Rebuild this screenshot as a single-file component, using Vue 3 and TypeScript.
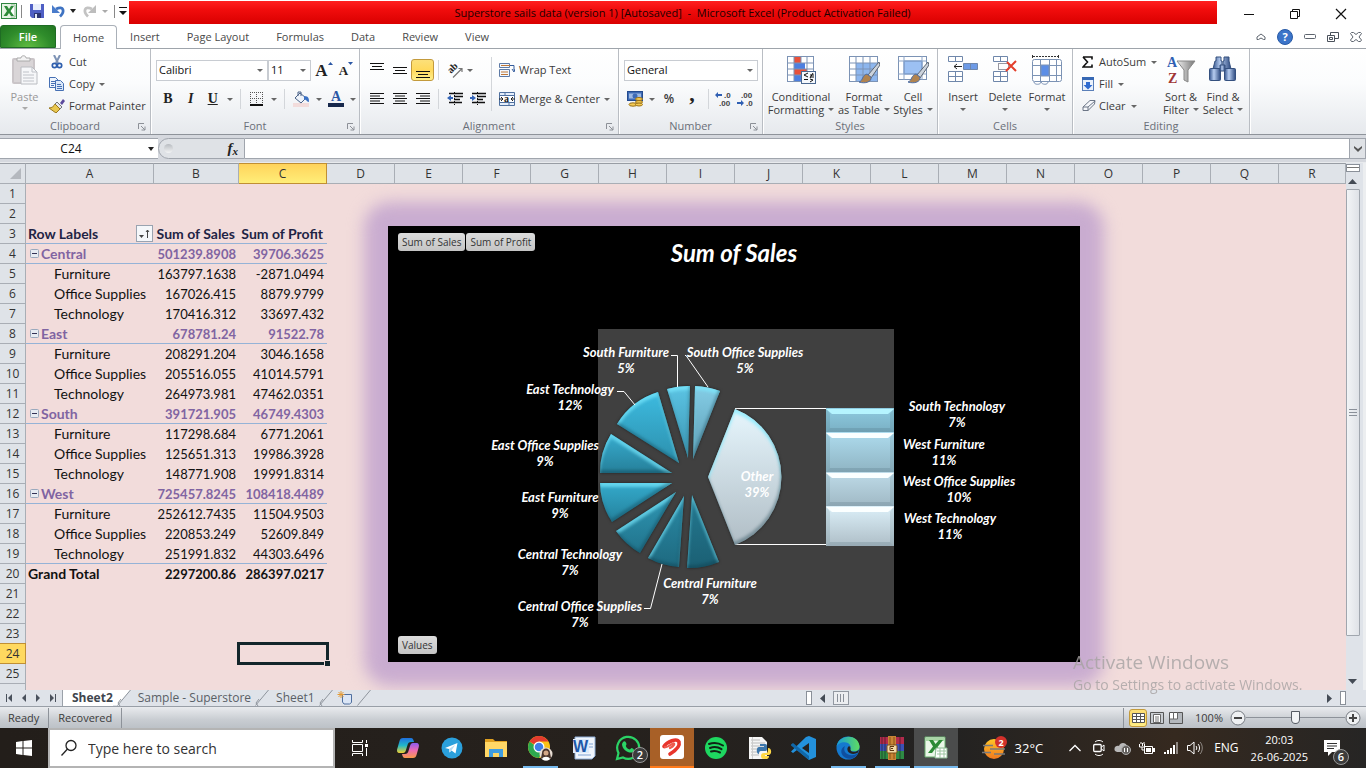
<script setup lang="ts">
import { ref } from 'vue'

interface PivotRow { kind: 'head' | 'group' | 'item' | 'total' | 'blank'; label?: string; sales?: string; profit?: string; line?: boolean }
interface Slice { d: string; top: string; bottom: string }
interface Label { name: string; pct: string; x: number; y: number }

const tabs = ['Home', 'Insert', 'Page Layout', 'Formulas', 'Data', 'Review', 'View']
const activeTab = ref('Home')
const font = ref('Calibri')
const size = ref('11')
const format = ref('General')
const formula = ref('')
const zoom = ref(50)
const search = ref('')

const columns = ['A', 'B', 'C', 'D', 'E', 'F', 'G', 'H', 'I', 'J', 'K', 'L', 'M', 'N', 'O', 'P', 'Q', 'R']

const blank = (n: number): PivotRow[] => Array.from({ length: n }, () => ({ kind: 'blank' as const }))
const item = (label: string, sales: string, profit: string, line = false): PivotRow => ({ kind: 'item', label, sales, profit, line })
const group = (label: string, sales: string, profit: string): PivotRow => ({ kind: 'group', label, sales, profit, line: true })

const rows: PivotRow[] = [
  ...blank(2),
  { kind: 'head', label: 'Row Labels', sales: 'Sum of Sales', profit: 'Sum of Profit', line: true },
  group('Central', '501239.8908', '39706.3625'),
  item('Furniture', '163797.1638', '-2871.0494'),
  item('Office Supplies', '167026.415', '8879.9799'),
  item('Technology', '170416.312', '33697.432'),
  group('East', '678781.24', '91522.78'),
  item('Furniture', '208291.204', '3046.1658'),
  item('Office Supplies', '205516.055', '41014.5791'),
  item('Technology', '264973.981', '47462.0351'),
  group('South', '391721.905', '46749.4303'),
  item('Furniture', '117298.684', '6771.2061'),
  item('Office Supplies', '125651.313', '19986.3928'),
  item('Technology', '148771.908', '19991.8314'),
  group('West', '725457.8245', '108418.4489'),
  item('Furniture', '252612.7435', '11504.9503'),
  item('Office Supplies', '220853.249', '52609.849'),
  item('Technology', '251991.832', '44303.6496', true),
  { kind: 'total', label: 'Grand Total', sales: '2297200.86', profit: '286397.0217' },
  ...blank(6),
]

const slices: Slice[] = [
  { d: 'M688 458 L667 389 A73 73 0 0 1 690 386 Z', top: '#5cc4e4', bottom: '#3a94b0' },
  { d: 'M693 459 L695 386 A73 73 0 0 1 720 391 Z', top: '#84cde6', bottom: '#5d9db3' },
  { d: 'M679 463 L617 424 A73 73 0 0 1 658 392 Z', top: '#3dbbe0', bottom: '#2c8fac' },
  { d: 'M672 473 L600 473 A73 73 0 0 1 611 434 Z', top: '#38add0', bottom: '#257f99' },
  { d: 'M672 483 L612 522 A73 73 0 0 1 600 483 Z', top: '#34aacb', bottom: '#24819c' },
  { d: 'M676 492 L640 553 A73 73 0 0 1 616 531 Z', top: '#2f98b6', bottom: '#21738b' },
  { d: 'M684 496 L679 567 A73 73 0 0 1 648 558 Z', top: '#2a8aa6', bottom: '#1e6a80' },
  { d: 'M692 495 L719 562 A73 73 0 0 1 687 568 Z', top: '#247991', bottom: '#1b6074' },
  { d: 'M708 477 L735 409 A73 73 0 0 1 735 545 Z', top: '#e6f6fd', bottom: '#b0bdc5' },
]

const bars = [
  { y: 408, h: 24, top: '#8ecbe0', bottom: '#7ab0c4' },
  { y: 432, h: 40, top: '#aedcee', bottom: '#8fb4c3' },
  { y: 472, h: 34, top: '#bedbe8', bottom: '#a0b9c5' },
  { y: 506, h: 40, top: '#dcf0f9', bottom: '#aebec7' },
]

const labels: Label[] = [
  { name: 'South Furniture', pct: '5%', x: 626, y: 357 },
  { name: 'South Office Supplies', pct: '5%', x: 745, y: 357 },
  { name: 'East Technology', pct: '12%', x: 570, y: 394 },
  { name: 'East Office Supplies', pct: '9%', x: 545, y: 450 },
  { name: 'East Furniture', pct: '9%', x: 560, y: 502 },
  { name: 'Central Technology', pct: '7%', x: 570, y: 559 },
  { name: 'Central Furniture', pct: '7%', x: 710, y: 588 },
  { name: 'Central Office Supplies', pct: '7%', x: 580, y: 611 },
  { name: 'Other', pct: '39%', x: 757, y: 481 },
  { name: 'South Technology', pct: '7%', x: 957, y: 411 },
  { name: 'West Furniture', pct: '11%', x: 944, y: 449 },
  { name: 'West Office Supplies', pct: '10%', x: 959, y: 486 },
  { name: 'West Technology', pct: '11%', x: 950, y: 523 },
]

const lineSets = {
  top: 'M0 1.5h14M2 4.5h10M0 7.5h14',
  middle: 'M0 5.5h14M2 8.5h10M0 11.5h14',
  bottom: 'M0 9.5h14M2 12.5h10M0 15.5h14',
}
</script>

<template>
  <div class="app">
    <!-- Title bar -->
    <header class="titlebar">
      <div class="quick">
        <svg width="16" height="16" viewBox="0 0 16 16"><rect x=".5" y=".5" width="15" height="15" fill="#e6f3e4" stroke="#2e8540"/><path d="M10 2h4v12h-4" fill="#fff" stroke="#8ebf91"/><path d="M3 3h3l2 3 2-3h3L9.500 8l3.500 5h-3L8 10l-2 3H2.500L6 8z" fill="#2d8a38"/></svg>
        <i class="bar"></i>
        <button aria-label="Save"><svg width="14" height="14" viewBox="0 0 14 14"><path d="M0 0h14v14H2l-2-2z" fill="#4f5fc4"/><path d="M3 0h8v6H3z" fill="#e8eefb"/><path d="M4 9h7v5H4z" fill="#2b3474"/><path d="M5 10h2v4H5z" fill="#dfe6f7"/></svg></button>
        <button class="undo" aria-label="Undo"><svg width="14" height="14" viewBox="0 0 14 14"><path d="M4 5c8-4 9 3 4 7.500" fill="none" stroke="#3f73c2" stroke-width="2.800"/><path d="M0 1v8h8z" fill="#4a7ccb"/></svg></button>
        <i class="arr dark"></i>
        <button class="redo" aria-label="Redo"><svg width="14" height="14" viewBox="0 0 14 14"><path d="M10 5c-8-4-9 3-4 7.500" fill="none" stroke="#c3c3c3" stroke-width="2.800"/><path d="M14 1v8H6z" fill="#bdbdbd"/></svg></button>
        <i class="arr pale"></i>
        <i class="bar end"></i>
        <svg width="8" height="8" viewBox="0 0 8 8"><path d="M0 .5h8" stroke="#111"/><path d="M0 4h8L4 8z" fill="#111"/></svg>
      </div>
      <div class="banner">Superstore sails data (version 1) [Autosaved]&nbsp; -&nbsp; Microsoft Excel (Product Activation Failed)</div>
      <div class="window">
        <button aria-label="Minimize"><svg width="12" height="12" viewBox="0 0 12 12"><path d="M1 6.500h10" stroke="#111"/></svg></button>
        <button aria-label="Restore"><svg width="12" height="12" viewBox="0 0 12 12" fill="none" stroke="#111"><path d="M3.500 3.500v-2h7v7h-2M1.500 3.500h7v7h-7z"/></svg></button>
        <button aria-label="Close"><svg width="12" height="12" viewBox="0 0 12 12"><path d="M1 1l10 10M11 1L1 11" stroke="#111" stroke-width="1.200"/></svg></button>
      </div>
    </header>

    <!-- Ribbon tabs -->
    <nav class="tabs">
      <button class="file">File</button>
      <button v-for="t in tabs" :key="t" class="tab" :class="{ on: t === activeTab }" @click="activeTab = t">{{ t }}</button>
      <div class="tools">
        <svg width="10" height="8" viewBox="0 0 10 8" fill="#fff" stroke="#5d646e"><path d="M1 4l4-3 4 3v2.500H7.500L5 5 2.500 6.500H1z"/></svg>
        <button class="help" aria-label="Help">?</button>
        <svg width="12" height="6" viewBox="0 0 12 6"><rect x=".5" y=".5" width="11" height="4" rx="1" fill="#fff" stroke="#5d646e"/></svg>
        <svg width="12" height="12" viewBox="0 0 12 12" fill="#fff" stroke="#4b525c"><path d="M3.500 1.500h8v6h-8z"/><path d="M.5 4.500h7v6h-7z"/><path d="M2.500 6.500h3v2h-3z"/></svg>
        <svg width="12" height="10" viewBox="0 0 12 10" fill="#fff" stroke="#5d646e"><path d="M.5 1.500l1-1h2L6 2.500 8.500.5h2l1 1L9 5l2.500 3-1 1.500h-2L6 7.500 3.500 9.500h-2L.5 8 3 5z"/></svg>
      </div>
    </nav>

    <!-- Ribbon -->
    <section class="ribbon">
      <div class="group g-clip">
        <div class="body">
          <button class="big paste"><svg width="28" height="30" viewBox="0 0 28 30"><rect x="1" y="3" width="23" height="26" rx="2" fill="#cac5c8"/><rect x="3" y="5" width="19" height="22" fill="#d9d5d7"/><path d="M6 6V3h4c0-3 5-3 5 0h4v3z" fill="#f3f3f3" stroke="#aaa"/><path d="M10 12h11l5 5v12H10z" fill="#f6f7f9" stroke="#babcc1"/><path d="M21 12v5h5M12 17h6M12 20h11M12 23h11M12 26h11" fill="none" stroke="#bfc2c8"/></svg><span>Paste</span><i class="arr pale"></i></button>
          <div class="stack">
            <button><svg width="16" height="14" viewBox="0 0 16 14"><path d="M5 0l4 8M11 0L7 8" stroke="#7d93b5" stroke-width="2"/><circle cx="5.500" cy="10.500" r="2.200" fill="none" stroke="#2f5fae" stroke-width="1.700"/><circle cx="10.500" cy="10.500" r="2.200" fill="none" stroke="#2f5fae" stroke-width="1.700"/></svg>Cut</button>
            <button><svg width="16" height="14" viewBox="0 0 16 14" stroke="#4670b4"><path d="M.5.500h6l3 3v7h-9z" fill="#eef4fc"/><path d="M2 4.500h4M2 6.500h4M2 8.500h3"/><path d="M6.500 3.500h5l3 3v7h-8z" fill="#dbe8f9"/><path d="M8 7.500h4M8 9.500h5M8 11.500h5"/></svg>Copy<i class="arr"></i></button>
            <button><svg width="16" height="14" viewBox="0 0 16 14"><path d="M11 4l3-4 2 2-3 4z" fill="#5b4a9c"/><path d="M8 3l5 5-2 2-5-5z" fill="#e8e8ec" stroke="#70747c"/><path d="M6 5l5 5-4 4-7-5c3 0 5-2 6-4z" fill="#e9c74f" stroke="#98761c"/></svg>Format Painter</button>
          </div>
        </div>
        <footer>Clipboard<svg class="launch" width="8" height="8" viewBox="0 0 8 8"><path d="M.5 6V.500H6M3 3l4 4M7 3.500V7H3.500" fill="none" stroke="#8c9097"/></svg></footer>
      </div>

      <div class="group g-font">
        <div class="body rows">
          <div class="row">
            <span class="combo w-font"><select v-model="font" aria-label="Font"><option>Calibri</option></select></span>
            <span class="combo w-size"><select v-model="size" aria-label="Font size"><option>11</option></select></span>
            <button class="w24 serif grow-a" aria-label="Grow font">A<svg width="5" height="3" viewBox="0 0 5 3"><path d="M0 3l2.500-3L5 3z" fill="#2b57a5"/></svg></button>
            <button class="w22 serif shrink-a" aria-label="Shrink font">A<svg width="5" height="3" viewBox="0 0 5 3"><path d="M0 0l2.500 3L5 0z" fill="#2b57a5"/></svg></button>
          </div>
          <div class="row">
            <button class="w24 serif b">B</button><button class="w22 serif it">I</button><button class="w22 serif u">U</button><button class="w12" aria-label="Underline style"><i class="arr"></i></button>
            <i class="vsep"></i>
            <button class="w24" aria-label="Borders"><svg width="14" height="14" viewBox="0 0 14 14"><path d="M0 .5h13M0 6.500h13M.5 0v12M6.500 0v12M12.500 0v12" stroke="#555" stroke-dasharray="1 1"/><path d="M0 13h13" stroke="#111" stroke-width="2"/></svg></button><button class="w12" aria-label="Border style"><i class="arr"></i></button>
            <i class="vsep"></i>
            <button class="w24" aria-label="Fill colour"><svg width="17" height="16" viewBox="0 0 17 16"><path d="M0 12h16v4H0z" fill="#f2dcdb"/><path d="M7 2l6 5-5 5-6-5z" fill="#eef3fa" stroke="#4a6288"/><path d="M5 5V1h3v4" fill="none" stroke="#4a6288"/><path d="M11 5c5 0 5 3 5 6-3 0-2-3-5-2z" fill="#3b71c4"/></svg></button><button class="w12" aria-label="Fill palette"><i class="arr"></i></button>
            <button class="w22 serif fc" aria-label="Font colour"><span>A</span><i></i></button><button class="w12" aria-label="Font palette"><i class="arr"></i></button>
          </div>
        </div>
        <footer>Font<svg class="launch" width="8" height="8" viewBox="0 0 8 8"><path d="M.5 6V.500H6M3 3l4 4M7 3.500V7H3.500" fill="none" stroke="#8c9097"/></svg></footer>
      </div>

      <div class="group g-align">
        <div class="body cols">
          <div class="rows">
            <div class="row">
              <button class="w23" aria-label="Top align"><svg width="14" height="17" viewBox="0 0 14 17"><path :d="lineSets.top" stroke="#111"/></svg></button>
              <button class="w23" aria-label="Middle align"><svg width="14" height="17" viewBox="0 0 14 17"><path :d="lineSets.middle" stroke="#111"/></svg></button>
              <button class="w23 hot" aria-label="Bottom align"><svg width="14" height="17" viewBox="0 0 14 17"><path :d="lineSets.bottom" stroke="#111"/></svg></button>
              <i class="vsep"></i>
              <button class="w24" aria-label="Orientation"><svg class="over" width="20" height="20" viewBox="0 0 20 20"><text class="ab" x="6" y="14" transform="rotate(-45 6 14)">ab</text><path d="M8 17.500l9-9M13.500 8.500H17V12" fill="none" stroke="#777" stroke-width="1.200"/></svg></button><i class="arr"></i>
            </div>
            <div class="row">
              <button class="w23" aria-label="Align left"><svg width="14" height="12" viewBox="0 0 14 12"><path d="M0 .5h14M0 3h10M0 5.500h14M0 8h10M0 10.500h14" stroke="#111"/></svg></button>
              <button class="w23" aria-label="Center"><svg width="14" height="12" viewBox="0 0 14 12"><path d="M0 .5h14M2 3h10M0 5.500h14M2 8h10M0 10.500h14" stroke="#111"/></svg></button>
              <button class="w23" aria-label="Align right"><svg width="14" height="12" viewBox="0 0 14 12"><path d="M0 .5h14M4 3h10M0 5.500h14M4 8h10M0 10.500h14" stroke="#111"/></svg></button>
              <i class="vsep"></i>
              <button class="w24" aria-label="Decrease indent"><svg width="16" height="14" viewBox="0 0 16 14"><path d="M2 1.500h14M7 4.500h9M7 7.500h6M2 10.500h13" stroke="#111" stroke-width="1.500"/><path d="M7.500 0v14" stroke="#111" stroke-dasharray="1 2"/><path d="M0 6l4-3v2h2v2H4v2z" fill="#3465b8"/></svg></button>
              <button class="w22" aria-label="Increase indent"><svg width="16" height="14" viewBox="0 0 16 14"><path d="M2 1.500h14M7 4.500h9M7 7.500h6M2 10.500h13" stroke="#111" stroke-width="1.500"/><path d="M7.500 0v14" stroke="#111" stroke-dasharray="1 2"/><path d="M6 6L2 3v2H0v2h2v2z" fill="#3465b8"/></svg></button>
            </div>
          </div>
          <i class="vsep tall"></i>
          <div class="rows">
            <div class="row"><button class="wide"><svg width="16" height="14" viewBox="0 0 16 14"><path d="M.5.500h10v4H.5zM.5 6.500h10v7H.5z" fill="#f4f8fd" stroke="#5d7aa6"/><path d="M2 2.500h12M2 9h7M2 11.500h7" stroke="#c07838" stroke-width="1.200"/><path d="M11 2.500h4v5M13 6l2 3 1-3" fill="none" stroke="#345c9c"/></svg>Wrap Text</button></div>
            <div class="row"><button class="wide"><svg width="16" height="14" viewBox="0 0 16 14"><path d="M.5.500h15v13H.5zM.5 3.500h15M.5 10.500h15M6 0v3M10 10v3" fill="#e4eefb" stroke="#4f709f"/><path d="M1 4h14v6H1z" fill="#fff"/><path d="M0 7h4M12 7h4M2 5l2 2-2 2M14 5l-2 2 2 2" stroke="#222" fill="none"/><text class="ab" x="5" y="10">a</text></svg>Merge &amp; Center<i class="arr"></i></button></div>
          </div>
        </div>
        <footer>Alignment<svg class="launch" width="8" height="8" viewBox="0 0 8 8"><path d="M.5 6V.500H6M3 3l4 4M7 3.500V7H3.500" fill="none" stroke="#8c9097"/></svg></footer>
      </div>

      <div class="group g-num">
        <div class="body rows">
          <div class="row"><span class="combo w-num"><select v-model="format" aria-label="Number format"><option>General</option></select></span></div>
          <div class="row">
            <button class="w22" aria-label="Accounting format"><svg width="17" height="16" viewBox="0 0 17 16"><rect x=".5" y=".5" width="15" height="9" fill="#3e6bb5" stroke="#234b8f"/><path d="M2 2.500h12v5H2z" fill="#9db9e2"/><circle cx="8" cy="5" r="2.500" fill="#3e6bb5"/><ellipse cx="12" cy="8" rx="3.500" ry="1.500" fill="#f5cb55" stroke="#9a7217"/><ellipse cx="12" cy="11" rx="3.500" ry="1.500" fill="#f5cb55" stroke="#9a7217"/><ellipse cx="6" cy="13.500" rx="4" ry="1.700" fill="#f5cb55" stroke="#9a7217"/><ellipse cx="12" cy="13.500" rx="3.500" ry="1.500" fill="#f5cb55" stroke="#9a7217"/></svg></button><button class="w12" aria-label="Currency"><i class="arr"></i></button>
            <button class="w22 pct">%</button><button class="w24 serif comma">,</button>
            <i class="vsep"></i>
            <button class="w22 dec" aria-label="Increase decimal"><svg width="18" height="20" viewBox="0 0 18 20"><path d="M0 6l3-3v2h4v2H3v2z" fill="#2f5fb3"/><text x="9" y="9">.0</text><text x="4" y="17">.00</text></svg></button>
            <button class="w22 dec" aria-label="Decrease decimal"><svg width="18" height="20" viewBox="0 0 18 20"><path d="M7 14l-3-3v2H0v2h4v2z" fill="#2f5fb3"/><text x="4" y="9">.00</text><text x="9" y="17">.0</text></svg></button>
          </div>
        </div>
        <footer>Number<svg class="launch" width="8" height="8" viewBox="0 0 8 8"><path d="M.5 6V.500H6M3 3l4 4M7 3.500V7H3.500" fill="none" stroke="#8c9097"/></svg></footer>
      </div>

      <div class="group g-style">
        <div class="body">
          <button class="big w-cond"><svg width="32" height="30" viewBox="0 0 32 30"><rect x="2.500" y="1.500" width="26" height="25" fill="#fff" stroke="#7c93b5"/><path d="M9 2h7v6H9zM9 14h13v6H9z" fill="#e8503a"/><path d="M9 8h11v6H9zM9 20h7v6H9z" fill="#4d7fe0"/><path d="M2 8h27M2 14h27M2 20h27M9 1v26M16 1v7M22 1v26" stroke="#7c93b5"/><rect x="16.500" y="16.500" width="14" height="12" fill="#f5f8fc" stroke="#4b6890"/><path d="M23 18l-4 2 4 2M19 24.500h4M25 20h4M25 22h4M28 18l-3 5M25 24l3 1-3 2" fill="none" stroke="#111"/></svg><span>Conditional</span><span>Formatting<i class="arr"></i></span></button>
          <button class="big w-fmt"><svg width="32" height="30" viewBox="0 0 32 30"><rect x="1.500" y="1.500" width="28" height="25" fill="#fff" stroke="#7c93b5"/><path d="M8 8h21v18H8z" fill="#8db6ee"/><path d="M1 8h28M1 14h28M1 20h28M8 1v26M15 1v26M22 1v26" stroke="#7c93b5"/><path d="M31 7L20 20l3 3 9-13z" fill="#ccd3dc" stroke="#5d6672"/><path d="M19 19c-5 1-4 7-8 8 6 2 13 0 12-5z" fill="#b08350" stroke="#4d6fa8"/></svg><span>Format</span><span>as Table<i class="arr"></i></span></button>
          <button class="big w-cell"><svg width="32" height="30" viewBox="0 0 32 30"><rect x="1.500" y="1.500" width="28" height="23" fill="#fff" stroke="#7c93b5"/><path d="M7 6h18v13H7z" fill="#9cc0f3" stroke="#5b86c9"/><path d="M1 6h28M1 19h28M7 1v24M25 1v24" stroke="#8ba3c6"/><path d="M31 7L20 20l3 3 9-13z" fill="#ccd3dc" stroke="#5d6672"/><path d="M19 19c-5 1-4 7-8 8 6 2 13 0 12-5z" fill="#b08350" stroke="#4d6fa8"/></svg><span>Cell</span><span>Styles<i class="arr"></i></span></button>
        </div>
        <footer>Styles</footer>
      </div>

      <div class="group g-cells">
        <div class="body">
          <button class="big w42"><svg width="32" height="30" viewBox="0 0 32 30" stroke="#6f87ab"><path d="M1.500 1.500h14v5h-14zM8.500 1.500v5M1.500 16.500h14v10h-14zM1.500 21.500h14M8.500 16.500v10" fill="#fff"/><path d="M16.500 8.500h14v6h-14zM23.500 8.500v6" fill="#6d9ae6"/><path d="M7 11.500h8M10 9l-3 2.500 3 2.500" fill="none" stroke="#222"/></svg><span>Insert</span><span><i class="arr"></i></span></button>
          <button class="big w42"><svg width="32" height="30" viewBox="0 0 32 30" stroke="#6f87ab"><path d="M4.500 1.500h14v5h-14zM11.500 1.500v5M4.500 16.500h14v10h-14zM4.500 21.500h14M11.500 16.500v10" fill="#fff"/><path d="M9.500 8.500h10v6h-10z" fill="none" stroke="#334" stroke-dasharray="1 1"/><path d="M18 7l9 9M27 6l-10 10" stroke="#e33e2b" stroke-width="2"/></svg><span>Delete</span><span><i class="arr"></i></span></button>
          <button class="big w42"><svg width="32" height="30" viewBox="0 0 32 30" stroke="#7c93b5"><path d="M2 1.500h25" stroke="#333" stroke-dasharray="2 1"/><path d="M1.500 0v3M27.500 0v3" stroke="#333"/><rect x="1.500" y="4.500" width="29" height="22" rx="2" fill="#fff"/><path d="M1 10.500h29M1 20.500h29M9.500 4v23M18.500 4v23M25.500 4v23"/><path d="M10 10h8v11h-8z" fill="#5c8ee6"/><path d="M3 27c0 3 7 3 7 0 1 3 7 3 7 0" fill="#fff"/></svg><span>Format</span><span><i class="arr"></i></span></button>
        </div>
        <footer>Cells</footer>
      </div>

      <div class="group g-edit">
        <div class="body">
          <div class="stack">
            <button><svg width="12" height="14" viewBox="0 0 12 14"><path d="M1 2h9v2.500M10 9.500V12H1l4.500-5L1 2" fill="none" stroke="#111" stroke-width="1.600"/></svg>AutoSum<i class="arr"></i></button>
            <button><svg width="12" height="14" viewBox="0 0 12 14"><rect x=".5" y=".5" width="11" height="13" fill="#eaf1fb" stroke="#5a7fb8"/><path d="M0 0h12v3H0z" fill="#3768b4"/><path d="M4 5h4v3h2.500L6 12.500 1.500 8H4z" fill="#2f6bd0"/></svg>Fill<i class="arr"></i></button>
            <button><svg class="clr" width="14" height="12" viewBox="0 0 14 12"><path d="M1 7l7-6.500h5L12.500 4 6 10.500H1z" fill="#f4f6fa" stroke="#6c7686"/><path d="M1 7h5l7-6M6 7v4" fill="none" stroke="#6c7686"/></svg>Clear<i class="arr"></i></button>
          </div>
          <button class="big w42"><svg width="32" height="30" viewBox="0 0 32 30"><defs><linearGradient id="fun"><stop offset="0" stop-color="#eee"/><stop offset="1" stop-color="#777"/></linearGradient></defs><path d="M12 6h18L23 15v12l-4-2V15z" fill="url(#fun)" stroke="#888"/><text x="2" y="12" class="ic-serif" fill="#2f5fb3">A</text><text x="3" y="28" class="ic-serif" fill="#a03535">Z</text></svg><span>Sort &amp;</span><span>Filter<i class="arr"></i></span></button>
          <button class="big w42"><svg width="32" height="30" viewBox="0 0 32 30"><defs><linearGradient id="bin"><stop offset="0" stop-color="#36568f"/><stop offset=".4" stop-color="#b7cdf0"/><stop offset="1" stop-color="#2d4a80"/></linearGradient></defs><g fill="url(#bin)" stroke="#34507f"><path d="M9 2h5v4h1v8H6l2-8h1zM17 2h5v4l2 8h-8V6h1z"/><rect x="2.500" y="13.500" width="11" height="12" rx="1"/><rect x="17.500" y="13.500" width="11" height="12" rx="1"/><path d="M13 10h5v6h-5z"/></g></svg><span>Find &amp;</span><span>Select<i class="arr"></i></span></button>
        </div>
        <footer>Editing</footer>
      </div>
    </section>

    <!-- Formula bar -->
    <section class="formula">
      <div class="namebox"><input value="C24" aria-label="Name box"><i class="arr dark"></i></div>
      <div class="fx"><i class="knob"></i><button aria-label="Insert function"><em>f</em><em class="x">x</em></button></div>
      <input v-model="formula" class="entry" aria-label="Formula">
      <button class="expand" aria-label="Expand formula bar"><svg width="8" height="6" viewBox="0 0 8 6"><path d="M0 0l4 3 4-3v2L4 6 0 2z" fill="#555"/></svg></button>
    </section>

    <!-- Worksheet -->
    <main class="work">
      <div class="sheet">
        <table>
          <colgroup><col class="c-row"><col class="c-a"><col class="c-b"><col class="c-c"><col v-for="n in 14" :key="n" class="c-n"><col></colgroup>
          <thead>
            <tr>
              <th class="corner"><svg width="11" height="11" viewBox="0 0 11 11"><path d="M11 0v11H0z" fill="#b4b8be"/></svg></th>
              <th v-for="c in columns" :key="c" :class="{ sel: c === 'C' }">{{ c }}</th>
            </tr>
          </thead>
          <tbody>
            <tr v-for="(r, i) in rows" :key="i" :class="['k-' + r.kind, { line: r.line }]">
              <th :class="{ sel: i === 23 }">{{ i < 25 ? i + 1 : '' }}</th>
              <td class="lab">
                <div v-if="r.label">
                  <svg v-if="r.kind === 'group'" width="9" height="9" viewBox="0 0 9 9"><rect x=".5" y=".5" width="8" height="8" rx="1" fill="#e6ebf2" stroke="#9aa9bd"/><path d="M2 4.500h5" stroke="#335"/></svg>
                  {{ r.label }}
                  <button v-if="r.kind === 'head'" class="filter" aria-label="Filter row labels"><svg width="11" height="10" viewBox="0 0 11 10"><path d="M0 6h5L2.500 9z" fill="#444"/><path d="M8.500 9V1M7 3l1.500-2L10 3" fill="none" stroke="#444"/></svg></button>
                </div>
              </td>
              <td class="num">{{ r.sales }}</td>
              <td class="num"><span v-if="i === 23" class="cursor"></span>{{ r.profit }}</td>
              <td colspan="15"></td>
            </tr>
          </tbody>
        </table>

        <figure class="chart">
          <svg width="692" height="436" viewBox="388 226 692 436">
            <defs>
              <linearGradient v-for="(s, i) in slices" :id="'s' + i" :key="'g' + i" x1="0" y1="0" x2="0" y2="1"><stop offset="0" :stop-color="s.top"/><stop offset="1" :stop-color="s.bottom"/></linearGradient>
              <linearGradient v-for="(b, i) in bars" :id="'b' + i" :key="'h' + i" x1="0" y1="0" x2="0" y2="1"><stop offset="0" :stop-color="b.top"/><stop offset="1" :stop-color="b.bottom"/></linearGradient>
              <filter id="bevel" x="-20%" y="-20%" width="140%" height="140%" color-interpolation-filters="sRGB">
                <feGaussianBlur in="SourceAlpha" stdDeviation="1.500" result="soft"/>
                <feOffset in="soft" dy="4" result="down"/>
                <feComposite in="SourceAlpha" in2="down" operator="out" result="hiMask"/>
                <feFlood flood-color="#7cecff" flood-opacity=".65"/>
                <feComposite in2="hiMask" operator="in" result="hi"/>
                <feOffset in="soft" dx="-1" dy="-3" result="up"/>
                <feComposite in="SourceAlpha" in2="up" operator="out" result="loMask"/>
                <feFlood flood-color="#0c3442" flood-opacity=".35"/>
                <feComposite in2="loMask" operator="in" result="lo"/>
                <feFlood flood-color="#000" flood-opacity=".5"/>
                <feComposite in2="soft" operator="in" result="shadow"/>
                <feMerge><feMergeNode in="shadow"/><feMergeNode in="SourceGraphic"/><feMergeNode in="hi"/><feMergeNode in="lo"/></feMerge>
              </filter>
            </defs>
            <rect x="388" y="226" width="692" height="436" fill="#000"/>
            <rect x="598" y="329" width="296" height="295" fill="#404040"/>
            <path d="M735 408.500H826M735 544.500H826" stroke="#fff"/>
            <path v-for="(s, i) in slices" :key="i" :d="s.d" :fill="`url(#s${i})`" filter="url(#bevel)"/>
            <g v-for="(b, i) in bars" :key="'b' + i">
              <rect x="826" :y="b.y" width="68" :height="b.h" :fill="`url(#b${i})`"/>
              <path :d="`M826 ${b.y}l4 6v${b.h - 10}l-4 4zM894 ${b.y}l-4 6v${b.h - 10}l4 4z`" fill="#40606c" opacity=".14"/>
              <path :d="`M826 ${b.y + b.h}l4-4h60l4 4z`" fill="#40606c" opacity=".2"/>
              <path :d="`M826 ${b.y + 1}h68l-6 5h-56z`" :fill="i === 0 ? '#b5f5ff' : '#fbffff'"/>
            </g>
            <g fill="none" stroke="#fff">
              <path d="M671 355.500h6.500V387"/><path d="M685 355.500h1L708 387"/><path d="M617 391.500h7L635 405"/><path d="M644 608.500h6.500L662 564"/>
            </g>
            <text x="734" y="262" class="title">Sum of Sales</text>
            <g v-for="l in labels" :key="l.name" class="lbl"><text :x="l.x" :y="l.y">{{ l.name }}</text><text :x="l.x" :y="l.y + 16">{{ l.pct }}</text></g>
          </svg>
          <div class="fields"><button>Sum of Sales</button><button>Sum of Profit</button></div>
          <div class="fields low"><button>Values</button></div>
        </figure>
      </div>
      <div class="vscroll">
        <i class="split"></i>
        <svg width="9" height="5" viewBox="0 0 9 5"><path d="M0 5l4.500-5L9 5z" fill="#444b55"/></svg>
        <div class="thumb"><svg width="8" height="7" viewBox="0 0 8 7"><path d="M0 .5h8M0 3.500h8M0 6.500h8" stroke="#8a9099"/></svg></div>
        <svg class="dn" width="9" height="5" viewBox="0 0 9 5"><path d="M0 0h9L4.500 5z" fill="#444b55"/></svg>
      </div>
      <div class="watermark"><b>Activate Windows</b><span>Go to Settings to activate Windows.</span></div>
    </main>

    <!-- Sheet tabs -->
    <section class="sheets">
      <div class="nav"><svg width="62" height="16" viewBox="0 0 62 16" fill="#4a515c"><path d="M6 4h1v8H6zM12 4v8L8 8zM26 4v8l-4-4zM36 4v8l4-4zM50 4v8l4-4zM55 4h1v8h-1z"/></svg></div>
      <button class="st on">Sheet2</button><svg width="22" height="16" viewBox="0 0 22 16"><path d="M0 0h17L5 15H0z" fill="#fff"/><path d="M17.500 0L4.500 15.500M8 9l-3 4 2 3" fill="none" stroke="#8f959d"/></svg>
      <button class="st mid">Sample - Superstore</button><svg width="22" height="16" viewBox="0 0 22 16"><path d="M17.500 0L4.500 15.500M8 9l-3 4 2 3" fill="none" stroke="#8f959d"/></svg>
      <button class="st mid">Sheet1</button><svg width="22" height="16" viewBox="0 0 22 16"><path d="M17.500 0L4.500 15.500M8 9l-3 4 2 3" fill="none" stroke="#8f959d"/></svg>
      <button class="st" aria-label="Insert worksheet"><svg width="16" height="14" viewBox="0 0 16 14"><path d="M5.500 3.500h9v8l-2 1.500H7l-1.500-2z" fill="#dbe6f6" stroke="#4f6f9f"/><path d="M4 0v7M.5 3.500h7M1.500 1l5 5M6.500 1l-5 5" stroke="#e39a35"/></svg></button><svg width="22" height="16" viewBox="0 0 22 16"><path d="M17.500 0L4.500 15.500" stroke="#8f959d"/></svg>
      <div class="hscroll">
        <i class="grip"></i>
        <svg width="5" height="9" viewBox="0 0 5 9"><path d="M5 0v9L0 4.500z" fill="#444b55"/></svg>
        <i class="hthumb"><svg width="7" height="8" viewBox="0 0 7 8"><path d="M.5 0v8M3.500 0v8M6.500 0v8" stroke="#8a9099"/></svg></i>
        <svg class="rt" width="5" height="9" viewBox="0 0 5 9"><path d="M0 0v9l5-4.500z" fill="#444b55"/></svg>
        <i class="grip"></i>
      </div>
    </section>

    <!-- Status bar -->
    <section class="status">
      <span class="s1">Ready</span><span class="s2">Recovered</span>
      <div class="views">
        <button class="hot" aria-label="Normal view"><svg width="13" height="10" viewBox="0 0 13 10"><path d="M.5.500h12v9H.5zM.5 3.500h12M.5 6.500h12M4.500 0v10M8.500 0v10" fill="#fff" stroke="#555"/></svg></button>
        <button aria-label="Page layout view"><svg width="14" height="12" viewBox="0 0 14 12"><path d="M.5.500h13v11H.5z" fill="#c9cdd2" stroke="#555"/><path d="M3.500 2.500h7v8h-7z" fill="#fff" stroke="#666"/><path d="M5 5h4M5 7h4M5 9h4" stroke="#777"/></svg></button>
        <button aria-label="Page break view"><svg width="14" height="12" viewBox="0 0 14 12"><path d="M.5.500h13v11H.5z" fill="#b4b8bd" stroke="#555"/><path d="M1 1h8v6H1z" fill="#fff"/><path d="M4.500 0v7M8.500 0v7H1" fill="none" stroke="#666"/></svg></button>
        <span class="pc">100%</span>
        <button class="circ" aria-label="Zoom out"><svg width="16" height="16" viewBox="0 0 16 16"><circle cx="8" cy="8" r="7" fill="#eef0f2" stroke="#777c83"/><path d="M4 8h8" stroke="#444" stroke-width="2"/></svg></button>
        <input v-model="zoom" type="range" min="0" max="100" aria-label="Zoom">
        <button class="circ" aria-label="Zoom in"><svg width="16" height="16" viewBox="0 0 16 16"><circle cx="8" cy="8" r="7" fill="#eef0f2" stroke="#777c83"/><path d="M4 8h8M8 4v8" stroke="#444" stroke-width="2"/></svg></button>
      </div>
    </section>

    <!-- Taskbar -->
    <footer class="taskbar">
      <button class="start" aria-label="Start"><svg width="16" height="16" viewBox="0 0 16 16" fill="#fff"><path d="M0 2l6.500-1v6.500H0zM7.500 1L16 0v7.500H7.500zM0 8.500h6.500V15L0 14zM7.500 8.500H16V16l-8.500-1z"/></svg></button>
      <label class="search"><svg width="18" height="18" viewBox="0 0 18 18" fill="none" stroke="#222" stroke-width="1.300"><circle cx="11" cy="6.500" r="5"/><path d="M7.500 10L1.500 16.500"/></svg><input v-model="search" placeholder="Type here to search" aria-label="Search"></label>
      <button class="slot tv" aria-label="Task view"><svg width="16" height="16" viewBox="0 0 16 16" fill="none" stroke="#fff"><path d="M.5 0v2.500h10V0M.5 16v-2.500h10V16M.5 4.500h10v7H.5zM14.500 0v3M14.500 8v8"/><path d="M13 4h3v3h-3z" fill="#fff" stroke="none"/></svg></button>
      <button class="slot" aria-label="Copilot"><svg width="24" height="22" viewBox="0 0 24 22"><defs><linearGradient id="cp1" x1="0" y1="0" x2="0" y2="1"><stop offset="0" stop-color="#1f6fe0"/><stop offset=".5" stop-color="#22b7c8"/><stop offset="1" stop-color="#f1d02f"/></linearGradient><linearGradient id="cp2" x1="0" y1="0" x2="0" y2="1"><stop offset="0" stop-color="#8b5cf0"/><stop offset=".5" stop-color="#ee6bb0"/><stop offset="1" stop-color="#f99a4a"/></linearGradient></defs><path d="M7 1h8c2 0 2.500 2 3 4h-3c-2 0-3 1-3.500 3L10 13c-.500 2-1.500 3-3 3H4c-3 0-3.500-2-2.500-5l2-7C4 2 5 1 7 1z" fill="url(#cp1)"/><path d="M17 21H9c-2 0-2.500-2-3-4h3c2 0 3-1 3.500-3L14 9c.500-2 1.500-3 3-3h3c3 0 3.500 2 2.500 5l-2 7c-.500 2-1.500 3-3.500 3z" fill="url(#cp2)"/></svg></button>
      <button class="slot" aria-label="Telegram"><svg width="22" height="22" viewBox="0 0 22 22"><circle cx="11" cy="11" r="10.500" fill="#2ba0dc"/><path d="M4 11l12.500-5-2 10.500-4-3-2 2-.500-3.500z" fill="#fff"/><path d="M8 12l6-4-3.500 5.500L8.500 15.500z" fill="#b9dcf2"/></svg></button>
      <button class="slot" aria-label="File Explorer"><svg width="24" height="22" viewBox="0 0 24 22"><path d="M1 2h8l2 2h12v4H1z" fill="#e0a020"/><path d="M1 5h22v15H1z" fill="#ffd766"/><path d="M5 12h14v8h-4v-4H9v4H5z" fill="#3f9de0"/></svg></button>
      <button class="slot run" aria-label="Chrome"><svg width="26" height="26" viewBox="0 0 26 26"><circle cx="12" cy="12" r="11" fill="#fbc116"/><path d="M2.500 6.500A11 11 0 0 0 12 23l4-8-6-3z" fill="#2da94f"/><path d="M12 12L2.500 6.500A11 11 0 0 1 21.500 6.500H12z" fill="#e33b2e"/><circle cx="12" cy="12" r="5.500" fill="#fff"/><circle cx="12" cy="12" r="4.300" fill="#3f7ee8"/><circle cx="19" cy="19" r="6.500" fill="#e8ddd4"/><path d="M15 18c0-6 8-6 8 0l1 5c-3 3-7 3-10 0z" fill="#4b352d"/><circle cx="19" cy="18" r="2.500" fill="#d5a888"/><path d="M15 24c1-3 7-3 8 0-2 2-6 2-8 0z" fill="#fff"/></svg></button>
      <button class="slot" aria-label="Word"><svg width="24" height="24" viewBox="0 0 24 24"><path d="M3 1h20v19l-3 3H3z" fill="#f0f5fc" stroke="#90afd8"/><path d="M17 8h4M17 11h4M6 19h13" stroke="#80a3d4"/><path d="M1 3h16v14H1z" fill="#ddeafa"/><text x="1" y="16" class="ic-word">W</text></svg></button>
      <button class="slot" aria-label="WhatsApp"><svg width="26" height="26" viewBox="0 0 26 26"><path d="M2 24l1.500-6A11 11 0 1 1 8 22.500z" fill="none" stroke="#2bd366" stroke-width="2.200"/><path d="M8 7c2-2 3 0 3.500 2 0 1-1 1.500-.500 2.500 1 2 2 2.500 3.500 3 1 0 1.500-1.500 2-1.500 2 .5 3 1.500 2.500 3C17 20 7 16 7 9z" fill="#2bd366"/></svg><i class="badge">2</i></button>
      <button class="slot airtel" aria-label="Airtel"><svg width="24" height="24" viewBox="0 0 24 24"><rect width="24" height="24" rx="3" fill="#fff"/><path d="M4 11.500C7 6.500 17 2.500 19 7c1.500 5-5 9.500-9 12" fill="none" stroke="#e8352c" stroke-width="3.600" stroke-linecap="round"/><path d="M5 12c2 1 5-2 8-3.500 2.500-.500 1 2.500-3 4.500" fill="none" stroke="#ee5a4d" stroke-width="2.200" stroke-linecap="round"/></svg></button>
      <button class="slot" aria-label="Spotify"><svg width="24" height="24" viewBox="0 0 24 24"><circle cx="12" cy="12" r="11" fill="#1ed760"/><path d="M5 8c5-2 10-1 14 1.500M6 12c4-1.500 8-1 11.500 1.200M7 15.500c3.500-1 6-.500 9 1" fill="none" stroke="#102315" stroke-width="2" stroke-linecap="round"/></svg></button>
      <button class="slot" aria-label="Python file"><svg width="24" height="24" viewBox="0 0 24 24"><path d="M1 1h13l5 5v17H1z" fill="#f5f5f5"/><path d="M3 4h9M3 7h14M3 10h14M3 13h8M3 16h6M3 19h8" stroke="#bbb"/><path d="M4.500 1v22" stroke="#ccc"/><path d="M12 8h5c2 0 2 1 2 3v2c0 2-1 2-3 2h-3c-2 0-2 2-2 3-3 0-3-7 0-7h5v-1h-4z" fill="#3c76ab"/><path d="M20 12c4 0 4 6 1 7h-4v1h4c0 3-2 3-4 3-3 0-4-1-4-3s1-3 3-3h2c2 0 2-2 2-5z" fill="#ffd846"/></svg></button>
      <button class="slot" aria-label="Visual Studio Code"><svg width="26" height="24" viewBox="0 0 26 24"><path d="M18 0l7 3v18l-7 3L6 14l-4 3-2-1.500L15 1z" fill="#2391dc"/><path d="M0 8.500L2 7l16 13v4L0 9.500z" fill="#1068aa"/><path d="M18 7v10l-7-5z" fill="#24211f"/></svg></button>
      <button class="slot run" aria-label="Edge"><svg width="24" height="24" viewBox="0 0 24 24"><defs><linearGradient id="eg" x1="0" y1="0" x2="1" y2="0"><stop offset="0" stop-color="#169bd8"/><stop offset="1" stop-color="#5fdc60"/></linearGradient></defs><circle cx="12" cy="12" r="11.500" fill="#1479cf"/><path d="M.5 11C2-2 22-3 23.500 10c.5 5-4 6-8 5-3-1 0-3-1-5C12 4 2 6 .5 11z" fill="url(#eg)"/><path d="M9 10c-2 4 0 8 5 9 3 .5 5 0 8-2-2 5-8 7-12 5-5-2-7-9-1-12z" fill="#0f4f9f"/><path d="M13 10c3 2 0 4 3 5.500 2 .7 5 .5 7-2l-1 3c-3 2-8 2-10-1-1-2-1-4 1-5.500z" fill="#262220"/></svg></button>
      <button class="slot run" aria-label="WinRAR"><svg width="24" height="24" viewBox="0 0 24 24"><rect y="1" width="24" height="7" fill="#b32b4c"/><rect y="8" width="24" height="7" fill="#3d51b5"/><rect y="15" width="24" height="8" fill="#2e8b44"/><path d="M2 1v22M5 1v22M20 1v22" stroke="#111" stroke-opacity=".5"/><path d="M8 0h8v24H8z" fill="#c98536"/><path d="M10 1v22M14 1v22" stroke="#8a5214"/><rect x="7" y="9" width="10" height="8" rx="1" fill="#f2d9a6" stroke="#7c4b12"/><path d="M14 10.500h-4v4h4M11 12.500h2" fill="none" stroke="#5b3510"/></svg></button>
      <button class="slot run excel" aria-label="Excel"><svg width="24" height="24" viewBox="0 0 24 24"><path d="M1 1h20v20H1z" fill="#eaf6e8" stroke="#69ad6c"/><path d="M2 2h18v3H2z" fill="#a8d6a5"/><path d="M5 4h4l2.500 4L15 4h4l-5.500 7 4 6h-4L11 13l-3 4H4l5-6.500z" fill="#2c8a35"/><path d="M12 12h11v10H11z" fill="#fff" stroke="#8ab890"/><path d="M13 15h9M13 18h9M16 12v10M20 12v10" stroke="#9dc5a0"/></svg></button>
      <div class="tray">
        <svg class="wx" width="26" height="24" viewBox="0 0 26 24"><defs><linearGradient id="sun" x1="0" y1="0" x2="0" y2="1"><stop offset="0" stop-color="#ffc629"/><stop offset="1" stop-color="#f0781e"/></linearGradient></defs><circle cx="12" cy="13" r="10" fill="url(#sun)"/><path d="M1 9.500h10M8 13h15M0 16.500h9M12 18h11" stroke="#77797c" stroke-width="1.700"/><circle cx="19" cy="6" r="6" fill="#d3312b"/><text x="16.500" y="9.500" class="ic-count">2</text></svg>
        <span class="temp">32°C</span>
        <svg class="i1" width="12" height="8" viewBox="0 0 12 8"><path d="M.5 7L6 1.500 11.500 7" fill="none" stroke="#fff" stroke-width="1.300"/></svg>
        <svg class="i2" width="12" height="16" viewBox="0 0 12 16" fill="none" stroke="#fff"><path d="M2 2c2-2 6-2 8 0M2 14c2 2 6 2 8 0" /><rect x=".7" y="4.500" width="7.500" height="7" rx="1" stroke-width="1.300"/><path d="M8.500 7L11 5v6L8.500 9"/></svg>
        <svg class="i3" width="17" height="14" viewBox="0 0 17 14"><path d="M1 10c-2-4 2-6 4-5 1-4 7-4 8 0 4 0 4 5 2 6H3z" fill="#b9b9b9"/><circle cx="12" cy="9" r="4.500" fill="#65625f" stroke="#aaa"/><path d="M10.500 7v4M13.500 7v4" stroke="#fff"/></svg>
        <svg class="i4" width="16" height="13" viewBox="0 0 16 13"><path d="M3.500 4V1M.5 2v3h5V2M2 0v2M5 0v2M3 5v3h3" fill="none" stroke="#fff"/><path d="M5.500 4.500h8v7h-8z" fill="none" stroke="#fff"/><path d="M7 6h5v4H7zM14 6h2v4h-2z" fill="#fff"/></svg>
        <svg class="i5" width="14" height="12" viewBox="0 0 14 12" fill="#fff"><path d="M0 10h2v2H0zM3 8h2v4H3zM6 6h2v6H6zM9 3h2v9H9z"/><path d="M12 0h2v12h-2z" opacity=".45"/></svg>
        <svg class="i6" width="16" height="14" viewBox="0 0 16 14" fill="none" stroke="#fff"><path d="M.5 4.500H3L7 1v12L3 9.500H.5zM9 5c1 1 1 3 0 4M11 3c2 2 2 6 0 8"/><path d="M13 1c3 3 3 9 0 12" opacity=".45"/></svg>
        <span class="lang">ENG</span>
        <div class="clock"><span>20:03</span><span>26-06-2025</span></div>
        <div class="notif"><svg width="16" height="16" viewBox="0 0 16 16"><path d="M0 0h16v12H8l-4 4v-4H0z" fill="#fff"/><path d="M3 3.500h10M3 6h10M3 8.500h7" stroke="#333"/></svg><i class="badge">6</i></div>
      </div>
    </footer>
  </div>
</template>

<style>
html, body { margin: 0; overflow: hidden; }
</style>

<style scoped>
.app { height: 100vh; display: flex; flex-direction: column; overflow: hidden; font: 11px/14px "Open Sans", "Noto Sans", sans-serif; color: #3b3b3b; background: #fff; }
* { box-sizing: border-box; }
button { border: 0; background: none; padding: 0; margin: 0; font: inherit; color: inherit; display: inline-flex; align-items: center; justify-content: center; }
input, select { font: inherit; border: 0; outline: 0; margin: 0; border-radius: 0; }
svg { flex: none; display: block; }
i { font-style: normal; }
.arr { flex: none; width: 0; height: 0; border: 3px solid transparent; border-top-color: #666; border-bottom: 0; }
.arr.dark { border-top: 4px solid #222; }
.arr.pale { border-top-color: #aaa; }
.over { overflow: visible; }

.titlebar { flex: none; height: 25px; display: flex; align-items: flex-start; background: #fff; }
.quick { width: 129px; height: 22px; display: flex; align-items: center; padding-left: 1px; }
.quick .bar { width: 1px; height: 13px; background: #888; margin: 0 8px 0 4px; }
.quick .bar.end { margin: 0 4px 0 6px; }
.quick .undo { margin: 0 4px 0 8px; }
.quick .redo { margin: 0 6px; }
.banner { flex: 1; height: 23px; margin-top: 1px; padding-left: 19px; background: linear-gradient(#ff2020, #f00c0c 40%, #d90000); color: #1c0000; text-align: center; line-height: 24px; white-space: nowrap; }
.window { width: 149px; display: flex; justify-content: space-between; padding: 8px 19px 0 26px; }

.tabs { flex: none; height: 24px; display: flex; align-items: stretch; border-bottom: 1px solid #9ea4ab; color: #4a4a4a; }
.file { width: 56px; margin-right: 4px; background: radial-gradient(ellipse at 50% 110%, #63c043, #2f8c2b 60%, #217521); color: #fff; border-radius: 3px 3px 0 0; border: 1px solid #1f6c24; font-weight: 600; }
.tab { padding: 0 14px 0 13px; }
.tab.on { background: #fff; border: 1px solid #aab0b8; border-bottom: 0; border-radius: 4px 4px 0 0; margin-bottom: -1px; padding: 0 12px; }
.tools { margin-left: auto; display: flex; align-items: center; gap: 11px; padding-right: 4px; }
.help { width: 16px; height: 16px; border-radius: 50%; background: #3b74c9; border: 1px solid #285aa6; color: #fff; font-weight: 700; }

.ribbon { flex: none; height: 86px; display: flex; background: linear-gradient(#fff, #fbfcfd 40%, #e6e9ed); border-bottom: 1px solid #8e939a; }
.group { height: 85px; display: flex; flex-direction: column; border-right: 1px solid #b9bdc3; box-shadow: 1px 0 #fff; }
.group .body { flex: 1; display: flex; }
.group > footer { height: 16px; position: relative; text-align: center; color: #6a6f78; line-height: 15px; }
.launch { position: absolute; right: 4px; bottom: 3px; }
.g-clip { width: 151px; }
.g-font { width: 209px; }
.g-align { width: 259px; }
.g-num { width: 144px; }
.g-style { width: 175px; }
.g-cells { width: 135px; }
.g-edit { width: 177px; }
.g-font .body, .g-num .body { padding-left: 5px; }
.g-align .body { padding-left: 5px; }
.g-style .body, .g-cells .body { padding-left: 4px; }
.big { flex-direction: column; justify-content: flex-start; padding-top: 6px; line-height: 13px; }
.big > svg { margin-bottom: 5px; }
.big > span { display: flex; align-items: center; gap: 4px; min-height: 13px; white-space: nowrap; }
.w-cond { width: 68px; }
.w-fmt { width: 58px; }
.w-cell { width: 40px; }
.w42 { width: 42px; }
.paste { width: 49px; color: #999; }
.paste .arr { margin-top: 4px; }
.stack { padding-top: 2px; display: flex; flex-direction: column; }
.stack button { height: 22px; justify-content: flex-start; gap: 4px; white-space: nowrap; }
.g-edit .stack { width: 80px; padding-left: 9px; margin-right: 7px; }
.g-edit .stack button { gap: 5px; }
.g-edit .stack .clr { margin-right: -2px; }
.rows { display: flex; flex-direction: column; padding-top: 10px; gap: 7px; }
.group .body.rows { flex-direction: column; }
.row { height: 22px; display: flex; align-items: center; }
.combo { position: relative; height: 21px; border: 1px solid #c8ccd2; background: #fff; display: block; }
.combo::after { content: ""; position: absolute; right: 4px; top: 8px; border: 3px solid transparent; border-top-color: #666; border-bottom: 0; }
.combo select { appearance: none; width: 100%; height: 19px; padding: 0 2px; background: transparent; color: #111; display: block; }
.w-font { width: 112px; }
.w-size { width: 43px; }
.w-num { width: 134px; }
.w12 { width: 12px; height: 22px; }
.w22 { width: 22px; height: 22px; }
.w23 { width: 23px; height: 22px; }
.w24 { width: 24px; height: 22px; }
.wide { gap: 4px; white-space: nowrap; }
.vsep { width: 1px; height: 20px; background: #d3d6da; margin: 0 4px; }
.vsep.tall { height: 54px; margin: 8px 7px 0 2px; }
.hot { background: linear-gradient(#fce07a, #ffd95c 50%, #fff08c); border: 1px solid #c39a3c; border-radius: 3px; }
.serif { font: 700 14px/18px "Liberation Serif", serif; color: #222; align-items: center; }
.grow-a { font-size: 17px; align-items: flex-start; padding-left: 2px; padding-top: 3px; }
.shrink-a { font-size: 13px; align-items: flex-start; padding-top: 3px; }
.it { font-style: italic; }
.u { text-decoration: underline; }
.fc { flex-direction: column; color: #2b57a5; line-height: 12px; }
.fc i { width: 16px; height: 4px; background: #17284b; }
.pct { font-size: 12px; font-weight: 600; }
.comma { font-size: 22px; padding-bottom: 10px; }
.dec text { font: 700 8px "Liberation Sans", sans-serif; fill: #444; }
.ab { font: 700 10px "Liberation Serif", serif; fill: #222; }
.ic-serif { font: 700 14px "Liberation Serif", serif; }
.ic-word { font: 700 16px "Liberation Sans", sans-serif; fill: #1e58a8; }
.ic-count { font: 700 9px "Open Sans", sans-serif; fill: #fff; }

.formula { flex: none; height: 28px; display: flex; padding: 3px 0 3px; background: #d5d8de; border-bottom: 1px solid #e8eaed; }
.namebox { width: 158px; display: flex; align-items: center; background: #fff; border: 1px solid #a0a5ad; border-width: 1px 0; padding-right: 4px; }
.namebox input { flex: 1; width: 20px; text-align: center; background: transparent; color: #111; font: 12px "Open Sans", sans-serif; padding-right: 8px; }
.fx { width: 87px; display: flex; justify-content: space-between; align-items: center; background: #dfe2e6; border: 1px solid #a0a5ad; border-radius: 11px 0 0 11px; padding: 0 6px 0 5px; }
.knob { width: 9px; height: 9px; border-radius: 50%; background: linear-gradient(#b8bcc1, #f3f4f5); }
.fx button { font: italic 700 15px "Liberation Serif", serif; color: #222; }
.fx .x { font-size: 11px; padding-top: 4px; }
.entry { flex: 1; min-width: 0; background: #fff; border: 1px solid #a0a5ad; border-width: 1px 0; }
.expand { width: 17px; background: #dfe2e6; border: 1px solid #a0a5ad; }

.work { flex: 1; min-height: 0; display: flex; position: relative; }
.sheet { flex: 1; min-width: 0; position: relative; overflow: hidden; background: #f2dcdb; }
table { width: 100%; table-layout: fixed; border-spacing: 0; font: 14px/18px Lato, "Open Sans", sans-serif; color: #111; }
.c-row { width: 26px; } .c-a { width: 128px; } .c-b { width: 85px; } .c-c { width: 88px; } .c-n { width: 68px; }
th, td { padding: 0; height: 20px; overflow: visible; white-space: nowrap; }
th { font: 12px/19px "Open Sans", sans-serif; color: #333; background: #dfe3e8; border-right: 1px solid #a9aeb5; border-bottom: 1px solid #a9aeb5; }
thead th { height: 21px; border-top: 1px solid #989da4; }
.corner svg { margin: 0 4px 0 auto; }
th.sel { background: linear-gradient(#ffd35c, #ffee78); border-color: #c08f34; }
tbody th.sel { background: #ffd95f; box-shadow: 0 -1px #c08f34; }
.line td { border-bottom: 1px solid #95b3d7; }
.line td:last-child { border: 0; }
.lab > div { display: flex; align-items: center; padding-left: 2px; }
.k-item .lab > div { padding-left: 28px; }
.k-group .lab > div { padding-left: 4px; gap: 2px; }
.k-group { color: #8064a2; font-weight: 700; }
.k-head { font-weight: 700; color: #1f2445; }
.k-total { font-weight: 700; }
.num { text-align: right; padding-right: 3px; position: relative; font-size: 13px; }
.k-head .num { padding-right: 4px; font-size: 14px; }
.filter { margin-left: auto; margin-right: 1px; width: 17px; height: 17px; background: #f5f7fa; border: 1px solid #9aa3b0; }
.cursor { position: absolute; inset: -2px -2px -1px -2px; border: 3px solid #13262b; }
.cursor::after { content: ""; position: absolute; right: -4px; bottom: -4px; width: 5px; height: 5px; background: #13262b; border: 1px solid #f2dcdb; border-width: 1px 0 0 1px; box-sizing: content-box; }

.chart { position: absolute; left: 388px; top: 63px; margin: 0; }
.chart::before { content: ""; position: absolute; inset: -24px; border-radius: 26px; background: #c9acd0; filter: blur(8px); }
.chart > svg { position: relative; }
.title { font: italic 700 24px Lato, sans-serif; fill: #fff; text-anchor: middle; }
.lbl { font: italic 700 13px Lato, sans-serif; fill: #fff; text-anchor: middle; }
.fields { position: absolute; left: 10px; top: 7px; display: flex; gap: 1px; }
.fields.low { top: auto; bottom: 8px; }
.fields button { height: 18px; padding: 0 4px; font-size: 10px; color: #333; background: linear-gradient(#dcdcdc, #c4c4c4); border-radius: 3px; white-space: nowrap; }
.vscroll { width: 20px; display: flex; flex-direction: column; align-items: center; background: #dfe3e9; padding-right: 4px; border-right: 3px solid #eceef0; }
.split { width: 14px; height: 8px; margin: 1px 0 7px; border: 1px solid #8a9099; background: linear-gradient(#fff 2px, #777 2px, #777 3px, #fff 3px); }
.thumb { width: 14px; height: 447px; margin-top: 5px; border: 1px solid #a0a6ae; border-radius: 1px; background: linear-gradient(90deg, #f2f4f6, #dfe2e7); display: flex; align-items: center; justify-content: center; }
.dn { margin-top: auto; margin-bottom: 6px; }
.watermark { position: absolute; z-index: 1; left: 1073px; bottom: -5px; display: flex; flex-direction: column; color: #a7a3a3; opacity: .8; white-space: nowrap; }
.watermark b { font: 19px/25px "Open Sans", sans-serif; }
.watermark span { font: 14px/20px "Open Sans", sans-serif; }

.sheets { flex: none; height: 17px; display: flex; background: #dfe3e9; border-bottom: 1px solid #999fa7; }
.nav { width: 63px; border-right: 1px solid #9ba1a9; }
.st { padding: 0; font-size: 12px; color: #5a5f66; white-space: nowrap; height: 16px; }
.st.on { background: #fff; font-weight: 700; padding: 0 0 0 9px; color: #40464d; }
.st.mid { padding: 0 0 0 3px; }
.hscroll { flex: 0 0 41%; margin-left: auto; display: flex; align-items: center; gap: 8px; padding-right: 20px; }
.grip { width: 6px; height: 14px; background: #fff; border: 1px solid #8a9099; }
.hthumb { width: 16px; height: 14px; border: 1px solid #9298a1; background: #eceef1; display: flex; align-items: center; justify-content: center; }
.rt { margin-left: auto; }

.status { flex: none; height: 21px; display: flex; align-items: center; background: linear-gradient(#e9ebee, #c9cdd2 60%, #bcc1c7); }
.s1 { padding: 0 9px 0 8px; border-right: 1px solid #8d9299; line-height: 20px; }
.s2 { padding: 0 9px; border-right: 1px solid #8d9299; line-height: 20px; }
.views { margin-left: auto; display: flex; align-items: center; gap: 5px; padding: 0 5px; border-left: 1px solid #8d9299; height: 20px; }
.views .hot { width: 18px; height: 18px; margin-right: -2px; }
.pc { margin: 0 2px 0 7px; }
input[type="range"] { appearance: none; width: 99px; height: 16px; margin: 0 -5px; background: linear-gradient(#8d9299, #8d9299) center / 100% 1px no-repeat; }
input[type="range"]::-webkit-slider-thumb { appearance: none; width: 9px; height: 13px; background: #f2f4f6; border: 1px solid #555b63; border-radius: 1px 1px 5px 5px; }

.taskbar { flex: none; height: 40px; display: flex; background: linear-gradient(90deg, #231e1a, #26211d 45%, #232221 70%, #35291f 86%, #262524); color: #fff; }
.start { width: 48px; }
.search { width: 287px; display: flex; align-items: center; gap: 8px; padding-left: 10px; background: #fff; border: 2px solid #b4b4b4; }
.search input { flex: 1; min-width: 0; font: 14px "Open Sans", sans-serif; background: transparent; }
.search input::placeholder { color: #333; opacity: 1; }
.slot { width: 44px; height: 40px; position: relative; }
.tv { margin: 0 4px 0 3px; }
.run::after { content: ""; position: absolute; left: 5px; right: 4px; bottom: 0; height: 2px; background: #76b9ed; }
.airtel { background: #a86027; border-bottom: 2px solid #ff7a1a; }
.excel { background: #4b4c4c; }
.excel::after { left: 0; right: 0; }
.badge { position: absolute; width: 16px; height: 16px; border-radius: 50%; background: #3c3c3c; border: 1px solid #999; font: 600 11px/14px "Open Sans", sans-serif; text-align: center; right: 2px; bottom: 5px; color: #fff; }
.tray { margin-left: auto; display: flex; align-items: center; }
.temp { font-size: 13px; margin: 0 26px 0 7px; }
.i1 { margin-right: 12px; } .i2 { margin-right: 9px; } .i3 { margin-right: 8px; } .i4 { margin-right: 9px; } .i5 { margin-right: 9px; } .i6 { margin-right: 11px; }
.lang { font-size: 12px; margin-right: 12px; }
.clock { display: flex; flex-direction: column; align-items: center; line-height: 17px; font-size: 11px; margin-right: 16px; }
.notif { position: relative; width: 42px; height: 17px; }
.notif .badge { right: 17px; bottom: -8px; }
</style>
